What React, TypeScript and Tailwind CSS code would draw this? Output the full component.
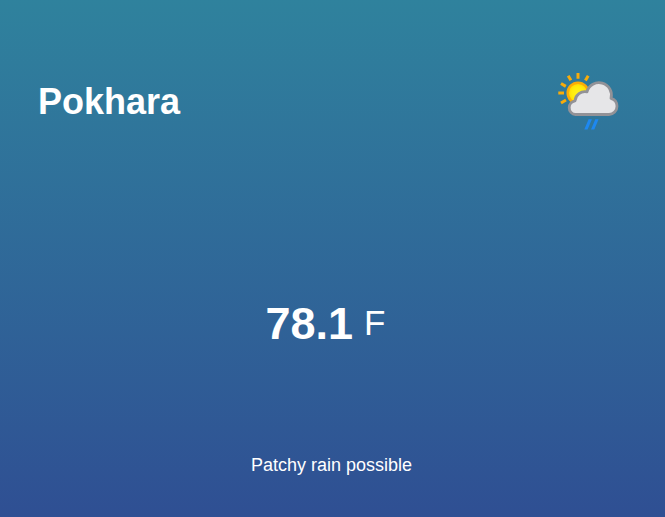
function WeatherIcon() {
  return (
    <svg viewBox="0 0 64 64" className="h-16 w-16" role="img" aria-label="Patchy rain possible">
      <defs>
        <radialGradient id="sun">
          <stop offset="0" stopColor="#fff21c" />
          <stop offset="0.6" stopColor="#ffec0c" />
          <stop offset="1" stopColor="#ffd400" />
        </radialGradient>
      </defs>
      <path
        d="M22 3v5.700M12.200 5.700l2.700 4.600M32.200 5.700l-2.800 4.800M5 13.500l4.800 2.900M2.300 23h5.700M5 33l5-3"
        fill="none"
        stroke="#f8ac0a"
        strokeWidth="3"
      />
      <circle cx="22" cy="23" r="10.300" fill="url(#sun)" stroke="#fbac08" strokeWidth="2.500" />
      <path
        d="M19.500 44.500A6.500 6.800 0 0 1 13.200 37.500A7 7 0 0 1 19 30.800A10 10 0 0 1 31 21.800A12.400 12.400 0 0 1 55 28.400A8.300 8.300 0 0 1 61 36.300A8 8.200 0 0 1 53 44.500Z"
        fill="#e6e6e8"
        stroke="#929297"
        strokeWidth="2.800"
        strokeLinejoin="round"
      />
      <path d="M32.600 49.200h3.300l-4.300 10.200h-3.300zM39.300 49.200h3.300l-4.300 10.200h-3.300z" fill="#1e88f0" />
    </svg>
  );
}

export default function App() {
  return (
    <main className="flex min-h-screen flex-col bg-linear-to-b from-[#2f829d] to-[#2f4f93] font-['Liberation_Sans',Arial,sans-serif] text-white">
      <header className="flex items-center justify-between pt-[70px] pr-[45px] pl-[38px]">
        <h1 className="text-4xl font-bold">Pokhara</h1>
        <WeatherIcon />
      </header>
      <section className="flex flex-1 items-center justify-center gap-[11px] pt-15 pr-3.5">
        <strong className="text-[45px] font-bold">78.1</strong>
        <span className="text-[35px]">F</span>
      </section>
      <p className="pr-0.5 pb-10 text-center text-lg leading-6">Patchy rain possible</p>
    </main>
  );
}
